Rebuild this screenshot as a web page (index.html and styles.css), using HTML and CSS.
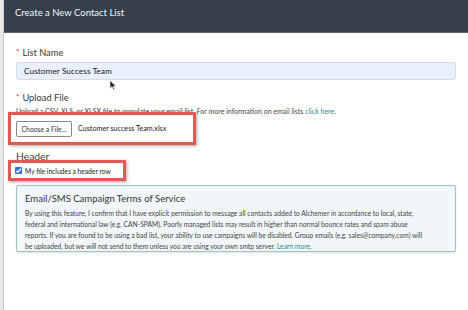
FILE: index.html
```html
<!DOCTYPE html>
<html lang="en">
<head>
  <meta charset="UTF-8" />
  <title>Create a New Contact List</title>
  <link rel="stylesheet" href="styles.css">
</head>
<body>
  <div class="modal">
    <div class="modal-header">Create a New Contact List</div>

    <div class="modal-body">
      <label class="field-label"><span class="req">*</span>List Name</label>
      <div class="text-input">Customer Success Team</div>

      <label class="field-label upload-label"><span class="req">*</span>Upload File</label>
      <p class="help">Upload a CSV, XLS, or XLSX file to populate your email list. For more information on email lists <a href="#">click here.</a></p>

      <div class="highlight file-row">
        <button class="file-btn">Choose a File...</button>
        <span class="file-name">Customer success Team.xlsx</span>
      </div>

      <div class="section-title">Header</div>
      <div class="highlight check-row">
        <span class="checkbox">
          <svg width="7" height="7" viewBox="0 0 8 8"><path d="M1.5 4.2 L3.3 6 L6.6 2" fill="none" stroke="#fff" stroke-width="1.6"/></svg>
        </span>
        <span>My file includes a header row</span>
      </div>

      <div class="terms">
        <div class="terms-title">Email/SMS Campaign Terms of Service</div>
        <p class="terms-text">By using this feature, I confirm that I have explicit permission to message all contacts added to Alchemer in accordance to local, state,<br>federal and international law (e.g. CAN-SPAM). Poorly managed lists may result in higher than normal bounce rates and spam abuse<br>reports. If you are found to be using a bad list, your ability to use campaigns will be disabled. Group emails (e.g. sales@company.com) will<br>be uploaded, but we will not send to them unless you are using your own smtp server. <a href="#">Learn more.</a></p>
      </div>
    </div>

    <!-- mouse pointer from the screenshot -->
    <svg class="pointer" width="8" height="11" viewBox="0 0 8 11"><path d="M1 0.5 L1 8.5 L3 6.6 L4.4 9.8 L5.6 9.3 L4.3 6.2 L7 6.2 Z" fill="#222" stroke="#fff" stroke-width="0.6"/></svg>
  </div>
</body>
</html>
```

FILE: styles.css
```css
body {
  margin: 0;
  background: #e9e9e9;
  font-family: Lato, "Open Sans", sans-serif;
  color: #333;
  overflow: hidden;
}

.modal {
  position: relative;
  margin-left: 3px;
  height: 310px;
  background: #fff;
  border-left: 1px solid #c9c9c9;
}

.modal-header {
  height: 33px;
  background: #36404c;
  color: #f2f4f6;
  font-size: 9.5px;
  line-height: 25px;
  padding-left: 11px;
  border-bottom: 1px solid #5b6470;
  box-sizing: border-box;
}

.modal-body {
  padding: 12px 11px 0 12px;
  display: flex;
  flex-direction: column;
  align-items: flex-start;
}

.field-label {
  font-size: 9.3px;
  color: #3a3a3a;
  line-height: 14px;
}

.req {
  color: #e0504a;
  font-size: 8px;
  font-weight: bold;
  margin-right: 3px;
  vertical-align: 1px;
}

.text-input {
  margin-top: 2px;
  width: 440px;
  height: 18px;
  box-sizing: border-box;
  background: #e8f0fe;
  border: 1px solid #d6dbe3;
  border-radius: 3px;
  font-size: 8.4px;
  line-height: 16px;
  padding-left: 7px;
  color: #222;
}

.upload-label {
  margin-top: 10px;
}

.help {
  margin: 1px 0 0;
  font-size: 7px;
  line-height: 10px;
  color: #444;
  white-space: nowrap;
}

.help a,
.terms-text a {
  color: #2c8a86;
  text-decoration: none;
}

.highlight {
  border: 3px solid #e05a55;
  box-shadow: 1px 1px 3px rgba(0, 0, 0, 0.35);
  box-sizing: border-box;
  display: flex;
  align-items: center;
  flex-shrink: 0;
  white-space: nowrap;
  margin-left: -8px;
}

.file-row {
  margin-top: -4px;
  width: 188px;
  height: 33px;
  padding-left: 5px;
  gap: 6px;
}

.file-btn {
  font-family: Lato, "Open Sans", sans-serif;
  font-size: 6.8px;
  color: #333;
  background: #fff;
  border: 1px solid #888;
  border-radius: 2px;
  height: 16px;
  width: 56px;
  padding: 0;
}

.file-name {
  font-size: 7.2px;
  color: #222;
}

.section-title {
  margin-top: 5px;
  font-size: 10.3px;
  color: #444;
  line-height: 12px;
}

.check-row {
  margin-top: -2px;
  width: 118px;
  height: 21px;
  padding-left: 4px;
  gap: 3px;
  font-size: 6.7px;
  color: #222;
}

.checkbox {
  width: 7px;
  height: 7px;
  background: #2f6fd6;
  border-radius: 1px;
  display: flex;
  align-items: center;
  justify-content: center;
}

.terms {
  margin-top: 4px;
  width: 440px;
  height: 67px;
  box-sizing: border-box;
  background: #f1f7f8;
  border: 1px solid #9fc4c2;
  border-radius: 2px;
  box-shadow: 0 1px 2px rgba(0, 0, 0, 0.12);
  padding: 6px 8px 0 8px;
}

.terms-title {
  font-size: 9.5px;
  color: #333;
  line-height: 14px;
}

.terms-text {
  margin: 2px 0 0;
  font-size: 6.7px;
  line-height: 11px;
  color: #444;
  white-space: nowrap;
}

.pointer {
  position: absolute;
  left: 105px;
  top: 80px;
}
```
